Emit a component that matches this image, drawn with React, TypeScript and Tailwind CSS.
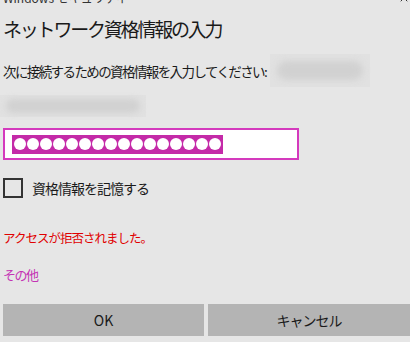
import { X } from "lucide-react";

const Blob = ({ className }: { className: string }) => (
  <div className={`shrink-0 bg-[#e1e1e1] ${className}`}>
    <div className="h-full w-full rounded-full bg-[#d1d1d1] blur-[3px]" />
  </div>
);

const App = () => {
  const dots = Array.from({ length: 16 }, (_, i) => i);

  return (
    <div className="w-[410px] h-[342px] overflow-hidden bg-[#e6e6e6] px-[3px] text-[#1a1a1a] font-['Noto_Sans_CJK_JP','Noto_Sans',sans-serif]">
      <div className="flex h-[5px] items-end justify-between overflow-hidden -mr-[3px]">
        <span className="text-[12px] leading-[14px] text-[#333]">Windows セキュリティ</span>
        <X size={12} strokeWidth={2} className="mb-[1px] text-[#333]" />
      </div>

      <h1 className="mt-[10px] h-[28px] text-[19px] leading-[28px] tracking-[-2.2px] font-normal">
        ネットワーク資格情報の入力
      </h1>

      <div className="mt-[11px] flex h-[33px] items-center">
        <p className="text-[13.5px] leading-[20px] tracking-[-1.6px] whitespace-nowrap">
          次に接続するための資格情報を入力してください:
        </p>
        <Blob className="ml-auto mr-[37px] h-[33px] w-[100px] p-[7px]" />
      </div>

      <Blob className="-ml-[3px] mt-[8px] h-[22px] w-[146px] px-[6px] py-[4px]" />

      <div className="mt-[11px] flex h-[32px] w-[296px] items-center border-2 border-[#d43abd] bg-white pl-[7px]">
        <div className="flex h-[19px] w-[211px] items-center gap-[1px] bg-[#c42aa8] px-[2px]">
          {dots.map((d) => (
            <span key={d} className="h-[12px] w-[12px] rounded-full bg-white" />
          ))}
        </div>
      </div>

      <label className="mt-[18px] flex h-[20px] items-center">
        <span className="h-[20px] w-[20px] border-2 border-[#333]" />
        <span className="ml-[9px] text-[14px] leading-[20px] tracking-[-1px]">資格情報を記憶する</span>
      </label>

      <p className="mt-[30px] text-[12.5px] leading-[20px] tracking-[-1px] text-[#e00000]">
        アクセスが拒否されました。
      </p>

      <p className="mt-[17px] text-[13px] leading-[20px] tracking-[-1.5px] text-[#c433b4]">その他</p>

      <div className="mt-[19px] -mr-[3px] flex gap-[4px]">
        <button className="h-[32px] w-[201px] bg-[#b4b4b4] text-[14px]">OK</button>
        <button className="h-[32px] flex-1 bg-[#b4b4b4] text-[14px] tracking-[-1px]">キャンセル</button>
      </div>
    </div>
  );
};

export default App;
